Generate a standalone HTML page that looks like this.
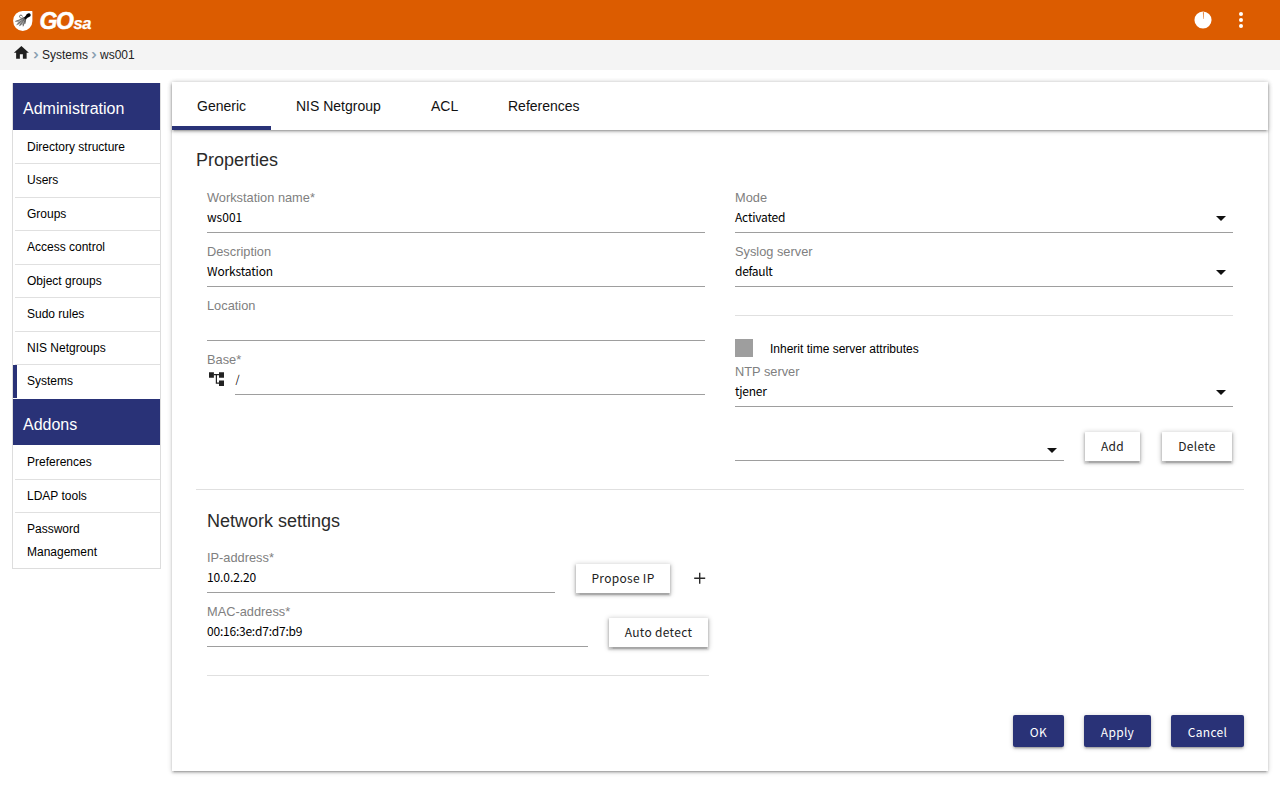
<!DOCTYPE html>
<html lang="en">
<head>
<meta charset="utf-8">
<title>GOsa - ws001</title>
<style>
*{box-sizing:border-box;margin:0;padding:0}
html,body{width:1280px;height:800px;overflow:hidden;background:#fff}
body{font-family:"Liberation Sans",sans-serif;font-size:13px;color:#000;position:relative}
div,span,h1,h2,h3,svg,nav,ul,li,a,label,button,header,main,section,aside,hr{position:absolute;display:block}
ul,li{list-style:none}
a{color:inherit;text-decoration:none;white-space:nowrap}
hr{border:0}
.ui{font-family:"Noto Sans CJK SC","Liberation Sans",sans-serif}
#hdr{left:0;top:0;width:1280px;height:40px;background:#dc5c00}
#brand{left:39.5px;top:6px;height:30px;line-height:30px;color:#fff;white-space:nowrap;font-style:italic;font-weight:bold}
#brand b{position:static;display:inline;font-size:23px;font-weight:bold;letter-spacing:-1.4px;-webkit-text-stroke:.5px #fff}
#brand i{position:static;display:inline;font-size:16.5px;letter-spacing:-.2px;margin-left:.9px;-webkit-text-stroke:.25px #fff}
#crumb{left:0;top:40px;width:1280px;height:30px;background:#f4f4f4}
#crumb a,#crumb span{top:0;height:30px;line-height:30px;font-size:12px;color:#222;white-space:nowrap}
#crumb .sep{color:#7f97ab;font-size:15px;top:-1px;-webkit-text-stroke:.3px #7f97ab}
#side{left:12px;top:83px;width:149px;height:486px;border:1px solid #ddd;border-top:0;background:#fff}
.sh{left:13px;width:147px;background:#293277;color:#fff;font-size:16px;white-space:nowrap}
.sh span{left:10px;height:20px;line-height:20px}
.si{left:27px;height:14px;line-height:14px;font-size:12px;color:#000;white-space:nowrap}
.ss{left:15px;width:145px;height:1px;background:#e0e0e0}
#panel{left:172px;top:82px;width:1096px;height:689px;background:#fff;box-shadow:0 2px 2px 0 rgba(0,0,0,.14),0 3px 1px -2px rgba(0,0,0,.12),0 1px 5px 0 rgba(0,0,0,.2)}
#tabs{left:172px;top:82px;width:1096px;height:48px;background:#fff;box-shadow:0 2px 2px 0 rgba(0,0,0,.14),0 3px 1px -2px rgba(0,0,0,.12),0 1px 5px 0 rgba(0,0,0,.2)}
#tabs a{top:0;height:48px;line-height:48px;font-size:14px;color:#111}
#ind{left:0;top:44px;width:99px;height:4px;background:#293277}
h2,h3{font-weight:normal;white-space:nowrap;color:#2b2b2b}
.lbl{font-size:12.8px;color:#808080;white-space:nowrap;height:16px;line-height:16px}
.val{font-size:12px;letter-spacing:-.3px;color:#000;white-space:nowrap;height:18px;line-height:18px}
.ln{height:1px;background:#9e9e9e}
.hr{height:1px;background:#e0e0e0}
.car{width:0;height:0;border-left:5px solid transparent;border-right:5px solid transparent;border-top:5px solid #111}
.btn{height:29px;line-height:16px;padding:0 0 2px 0;text-align:center;font-size:12px;letter-spacing:.3px;color:#222;background:#fff;border-radius:.5px;white-space:nowrap;box-shadow:0 2px 2px .5px rgba(0,0,0,.14),0 3px 1px -1.5px rgba(0,0,0,.12),0 1px 5px .5px rgba(0,0,0,.2)}
.btn.pri{box-shadow:0 2px 2px 0 rgba(0,0,0,.14),0 3px 1px -2px rgba(0,0,0,.12),0 1px 5px 0 rgba(0,0,0,.2);background:#293277;color:#fff;height:32px;padding:2px 0 0 0;border-radius:2px}
</style>
</head>
<body>
<header id="hdr">
  <svg id="logo" style="left:8px;top:6px" width="32" height="30" viewBox="8 6 32 30">
    <path d="M22.8 10.9H31.9Q32.4 10.9 32.4 11.4V20.9A9.65 10 0 1 1 22.8 10.9Z" fill="#fff"/>
    <path d="M24.6 17.4L15.4 21.3L18.2 22.6L16.6 24.8L19.8 24.6L19.6 26L22.2 24.8L23.2 26.2L24.6 23.6L25.8 22L26.2 18.6Z" fill="#6e6e6e" opacity="0.6"/>
    <g fill="none" stroke="#3c3c3c" stroke-width="0.6" stroke-linecap="round">
      <path d="M24.6 18L15.6 21.3M24.6 18.6L16.8 24.6M24.8 18.8L19.6 25.8M25.2 19L23.2 26M25.8 19L25 23.6"/>
      <path d="M23.6 17.6C21.2 19.2 19.2 17.6 19.6 16C20 14.6 22 14.6 22.4 16.2" stroke="#1c1c1c" stroke-width="0.65"/>
    </g>
    <path d="M27 14.6L29 16.6L25.6 19.4L23.8 17.8Z" fill="#0a0a0a"/>
    <ellipse cx="28.5" cy="15.2" rx="2.25" ry="1.85" transform="rotate(-20 28.5 15.2)" fill="#000"/>
  </svg>
  <div id="brand"><b>GO</b><i>sa</i></div>
  <svg id="pie" style="left:1194px;top:11px" width="18" height="18" viewBox="0 0 18 18"><circle cx="9" cy="9" r="8.55" fill="#fff"/><path d="M8.9 1.2L9.8 1.2L9.45 8L9.1 8Z" fill="#dc5c00"/></svg>
  <svg id="dots" style="left:1238px;top:12px" width="6" height="16" viewBox="0 0 6 16"><circle cx="3" cy="2" r="2" fill="#fff"/><circle cx="3" cy="8" r="2" fill="#fff"/><circle cx="3" cy="14" r="2" fill="#fff"/></svg>
</header>
<nav id="crumb">
  <svg style="left:12px;top:4px" width="18" height="18" viewBox="-0.5 0.3 24 24"><path d="M10 20v-6h4v6h5v-8h3L12 3 2 12h3v8z" fill="#1f1f1f"/></svg>
  <span class="sep" style="left:33.5px">›</span>
  <a style="left:42px">Systems</a>
  <span class="sep" style="left:91.5px">›</span>
  <a style="left:100px">ws001</a>
</nav>
<aside id="side"></aside>
<div class="sh" style="top:83px;height:47px"><span style="top:16px">Administration</span></div>
<a class="si" style="top:140px">Directory structure</a>
<hr class="ss" style="top:163px">
<a class="si" style="top:173px">Users</a>
<hr class="ss" style="top:197px">
<a class="si" style="top:207px">Groups</a>
<hr class="ss" style="top:230px">
<a class="si" style="top:240px">Access control</a>
<hr class="ss" style="top:264px">
<a class="si" style="top:274px">Object groups</a>
<hr class="ss" style="top:297px">
<a class="si" style="top:307px">Sudo rules</a>
<hr class="ss" style="top:331px">
<a class="si" style="top:341px">NIS Netgroups</a>
<hr class="ss" style="top:364px">
<a class="si" style="top:374px">Systems</a>
<div style="left:13px;top:365px;width:4px;height:33px;background:#293277"></div>
<div class="sh" style="top:399px;height:46px"><span style="top:16px">Addons</span></div>
<a class="si" style="top:455px">Preferences</a>
<hr class="ss" style="top:479px">
<a class="si" style="top:489px">LDAP tools</a>
<hr class="ss" style="top:512px">
<a class="si" style="top:522px">Password</a>
<a class="si" style="top:545px">Management</a>
<main id="panel"></main>
<nav id="tabs">
  <a style="left:25px">Generic</a>
  <a style="left:124px">NIS Netgroup</a>
  <a style="left:259px">ACL</a>
  <a style="left:336px">References</a>
  <div id="ind"></div>
</nav>
<h2 style="left:196px;top:148px;font-size:18px;line-height:24px">Properties</h2>
<label class="lbl" style="left:207px;top:190px">Workstation name*</label>
<div class="val ui" style="left:207px;top:208px;letter-spacing:0px">ws001</div>
<hr class="ln" style="left:207px;top:232px;width:498px">
<label class="lbl" style="left:207px;top:244px">Description</label>
<div class="val ui" style="left:207px;top:262px;letter-spacing:-0.15px">Workstation</div>
<hr class="ln" style="left:207px;top:286px;width:498px">
<label class="lbl" style="left:207px;top:298px">Location</label>
<hr class="ln" style="left:207px;top:340px;width:498px">
<label class="lbl" style="left:207px;top:352px">Base*</label>
<svg style="left:209px;top:372px" width="16" height="14" viewBox="0 0 16 14"><path d="M0 0.2h4.9v5.5H0zM10 0.2h5v5.5h-5zM10 8.4h5v5.5h-5z" fill="#222"/><path d="M4.9 2.7h5.1M7.4 2.7v8.4h2.6" fill="none" stroke="#222" stroke-width="1.2"/></svg>
<div class="val ui" style="left:235.5px;top:370px;letter-spacing:0px;font-size:10.5px">/</div>
<hr class="ln" style="left:235px;top:394px;width:470px">
<label class="lbl" style="left:735px;top:190px">Mode</label>
<div class="val ui" style="left:735px;top:208px;letter-spacing:-0.2px">Activated</div>
<div class="car" style="left:1216px;top:216px"></div>
<hr class="ln" style="left:735px;top:232px;width:498px">
<label class="lbl" style="left:735px;top:244px">Syslog server</label>
<div class="val ui" style="left:735px;top:262px;letter-spacing:-0.3px">default</div>
<div class="car" style="left:1216px;top:270px"></div>
<hr class="ln" style="left:735px;top:286px;width:498px">
<hr class="hr" style="left:735px;top:315px;width:498px">
<div style="left:735px;top:339px;width:18px;height:18px;background:#9e9e9e"></div>
<label style="left:770px;top:340px;height:18px;line-height:18px;font-size:12px;white-space:nowrap">Inherit time server attributes</label>
<label class="lbl" style="left:735px;top:364px">NTP server</label>
<div class="val ui" style="left:735px;top:382px;letter-spacing:-0.25px">tjener</div>
<div class="car" style="left:1216px;top:390px"></div>
<hr class="ln" style="left:735px;top:406px;width:498px">
<div class="car" style="left:1047px;top:448px"></div>
<hr class="ln" style="left:735px;top:460px;width:329px">
<button class="btn ui" style="left:1085px;top:432px;width:55px;border:0">Add</button>
<button class="btn ui" style="left:1162px;top:432px;width:70px;border:0">Delete</button>
<hr class="hr" style="left:196px;top:489px;width:1048px">
<h3 style="left:207px;top:509px;font-size:18px;line-height:24px">Network settings</h3>
<label class="lbl" style="left:207px;top:550px">IP-address*</label>
<div class="val ui" style="left:207px;top:568px;letter-spacing:-0.1px">10.0.2.20</div>
<hr class="ln" style="left:207px;top:592px;width:348px">
<button class="btn ui" style="left:576px;top:564px;width:94px;border:0">Propose IP</button>
<svg style="left:694px;top:572px" width="12" height="13" viewBox="0 0 12 13"><path d="M5.7 0.8v11M0.2 6.3h11" stroke="#2a2a2a" stroke-width="1.4" fill="none"/></svg>
<label class="lbl" style="left:207px;top:604px">MAC-address*</label>
<div class="val ui" style="left:207px;top:622px;letter-spacing:-0.22px">00:16:3e:d7:d7:b9</div>
<hr class="ln" style="left:207px;top:646px;width:381px">
<button class="btn ui" style="left:609px;top:618px;width:99px;border:0">Auto detect</button>
<hr class="hr" style="left:207px;top:675px;width:502px">
<button class="btn pri ui" style="left:1013px;top:715px;width:51px;border:0">OK</button>
<button class="btn pri ui" style="left:1084px;top:715px;width:67px;border:0">Apply</button>
<button class="btn pri ui" style="left:1171px;top:715px;width:73px;border:0">Cancel</button>
</body>
</html>
